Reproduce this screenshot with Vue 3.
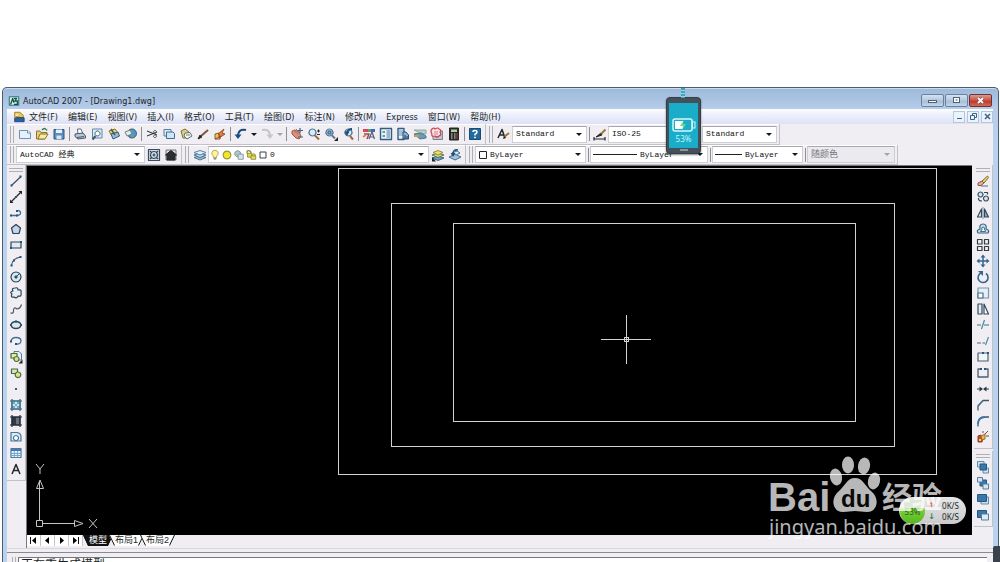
<script setup>
import { h, ref } from 'vue'

const N = '#22557f'
const K = '#20262b'
const L = '#bcd8ee'
const Y = '#ecd24c'
const X = 'none'

/* each shape: [path, fill, stroke, stroke width] */
const art = {
  page: [['M1.5 3.5H10L12.5 6V11.500H1.5Z', '#e4f1fb', '#6b93b5'], ['M9.500 3.500V6H12', '#fff', '#6b93b5']],
  open: [['M1.500 12V4H5L6 5.500H12L9.500 12Z', '#e3cf7c', '#8c762c'], ['M3 12L5 7H13L10 12Z', '#f7eaa5', '#8c762c'], ['M7 3Q10 0 12 3.500', X, '#2d7a52', 1.500]],
  save: [['M2 2.500H12V12H2Z', '#5b8fc0', '#2c567e'], ['M4 2.500H10V6H4Z', '#e6f1fa', X], ['M4.500 8.500H9.500V12H4.500Z', '#d8e4ee', X]],
  plot: [['M4.500 2H8L10 7H5Z', '#fff', '#596d80'], ['M2 7L10 6L12.500 9V11L5 12L2 9.500Z', '#b9c6d3', '#42586d'], ['M4 10.500L11 9.500', X, '#42586d']],
  preview: [['M2.500 2H12V11H2.500Z', '#dcecf9', '#5c89ad'], ['M7.500 4A2.500 2.500 0 1 1 7.490 4Z', '#fff', '#42586d'], ['M5.500 9L2.500 12.500', X, '#42586d', 2]],
  publish: [['M2 4L8 2L11 6L5 9Z', '#eedb5d', '#807223'], ['M4 7L11 5L12.500 9L6 12Z', '#94bad8', '#345b7b'], ['M4 2L8 8', X, '#435668', 1.500]],
  globe: [['M8 2A4.500 4.500 0 1 1 7.990 2Z', '#4f93c9', '#335b7f'], ['M6 3L9 4L7 7L10 9L8 11', '#6eb266', X], ['M1 5L6 3L8 7L3 9Z', '#e3e9ee', '#71808e']],
  cut: [['M2 4L12 8M2 9L12 5', X, K], ['M10 3.500A1.500 1.300 0 1 1 9.990 3.500ZM10 8A1.500 1.300 0 1 1 9.990 8Z', X, '#4a5b6a']],
  copy: [['M2 2.500H9V9H2Z', '#dcebf7', '#537fa3'], ['M4.500 5H11L12.500 6.500V11.500H4.500Z', '#cfe4f5', '#3f6f95']],
  paste: [['M2 4L6 2L10 5L9 11L4 11Z', '#dfd07d', '#7b7236'], ['M6 6L11 5.500L13 9L8 12L5 9Z', '#f4f4ee', '#5c727e'], ['M7 8H11', X, '#6c8f76']],
  brush: [['M2 12L4 8L6 10Z', K, K], ['M5 9L12 3', X, '#82533a', 2]],
  blockedit: [['M2 12V7L6 6V10Z', '#e9c85a', '#7e662d'], ['M5 7L11 2L9 6L12 7L6 11L7 8Z', '#e98238', '#9b4b29'], ['M2 12H7V9', X, '#9e3029']],
  undo: [['M12 3Q4 1 4 10', X, '#194b80', 2], ['M0.500 7.500H7.500L4 12Z', '#194b80', X]],
  redo: [['M2 3Q10 1 10 10', X, '#c5c6ca', 2], ['M6.500 7.500H13.500L10 12Z', '#c5c6ca', X]],
  pan: [['M2 4L5 3L9 5L11 9L9 12L6 11L2 7Z', '#d99079', '#a4594a'], ['M3 3L8 7M6 2L9 6', X, '#b66a58'], ['M10 1V6M7.500 3.500H13M8 10H13', X, '#33608a', 1.200]],
  zoom: [['M5.500 2A3.500 3.500 0 1 1 5.490 2Z', '#d7eafa', '#4a7092', 1.200], ['M8 8.500L12 12.500', X, '#a06a3d', 2], ['M10 4H13M11.500 2.500V5.500M10 7.500H13', X, K]],
  zoomwin: [['M5.500 2A3.500 3.500 0 1 1 5.490 2Z', '#d7eafa', '#4a7092', 1.200], ['M4 4H7V7H4Z', '#93b3cc', N], ['M8 8.500L11 11.500', X, '#6a7888', 2], ['M14 10V14H10Z', K, X]],
  zoomprev: [['M7.500 2A3.500 3.500 0 1 1 7.490 2Z', '#d7eafa', '#4a7092', 1.200], ['M9 9L12 12.500', X, '#a06a3d', 2], ['M11 2Q7 2 6 6', X, '#1e4d7d', 2], ['M3.500 4.500H8.500L6 9Z', '#1e4d7d', X]],
  props: [['M1 2H6V5H1Z', '#d34a54', X], ['M6 2H9V5H6Z', '#55a95d', X], ['M9 2H13V5H9Z', '#4a63bf', X], ['M2 7H7L5 12', X, '#9c4464', 1.500], ['M7 12L10 5L12.500 12M8 10H12', X, '#4d6077', 1.200], ['M1 10L4 8', X, '#d29134', 2]],
  center: [['M1.500 1.500H12.500V12.500H1.500Z', '#e8f2fa', '#315d87', 1.400], ['M3.500 4H6V6H3.500ZM3.500 8H6V10H3.500Z', '#62a183', X], ['M7.500 4H11M7.500 6H11M7.500 8H11M7.500 10H11', X, '#527799']],
  palette: [['M2 1.500H8V12.500H2Z', '#e8f2fa', '#315d87', 1.400], ['M3 4H7M3 6H7M3 8H7', X, '#6b8ea8'], ['M7 5H10L12.500 8V12H7Z', '#8fb5d5', '#264f75'], ['M9 8V12M11 9V12', X, '#1b3856']],
  sheets: [['M1 3H13V7L7 6Z', '#b8d0c9', '#8ea8a6'], ['M1 7L8 6L13 9V11L7 12Z', '#6f9ab5', '#51788f'], ['M1 9L6 9', X, '#cc9b49', 2]],
  markup: [['M3 4H12.500V12.500H3Z', '#bac7d3', '#76858f'], ['M2 2Q4 0 5 2Q8 0 9 2Q12 3 10 5Q12 8 9 9Q7 11 5 9Q1 10 2 7Q0 4 2 2Z', '#fae3e5', '#d33d49', 1.200], ['M4 5H8M4 7H8', X, '#da7f87']],
  calc: [['M2.500 1H11.500V13H2.500Z', '#292826', '#292826'], ['M4 2.500H10V5H4Z', '#a9d29c', X], ['M4 7H5.500M7 7H8.500M4 9H5.500M7 9H8.500M4 11H5.500M7 11H8.500', X, '#ddd'], ['M9.500 7H10.500M9.500 9H10.500M9.500 11H10.500', X, '#cf5146', 1.500]],
  help: [['M1.500 1.500H12.500V12.500H1.500Z', '#25699b', '#174a74'], ['M5 5Q5 3.500 7 3.500Q9 3.500 9 5Q9 6.500 7 7.200V8.500', X, '#fff', 1.500], ['M6.200 9.800H7.800V11.200H6.200Z', '#fff', X]],
  textstyle: [['M1 11L5 2.500L8 11M2.500 8H7', X, K, 1.500], ['M7 10L12 6', X, '#9c7737', 2], ['M6 12L7 9L9 11Z', K, X]],
  dimstyle: [['M1 12H12M1 10V13.500M12 10V13.500', X, K, 1.200], ['M3 10L8 6L9 8Z', K, K], ['M8 7L12.500 2.500', X, '#9c7737', 2]],
  gear: [['M1.500 1.500H12.500V12.500H1.500Z', '#d6dde6', '#394c5e', 1.200], ['M7 3.500A3.500 3.500 0 1 1 6.990 3.500ZM7 5.500V8.500M5.500 7H8.500M3 3L4.500 4.500M11 3L9.500 4.500M3 11L4.500 9.500M11 11L9.500 9.500', X, '#304459', 1.200]],
  home: [['M2 2H12V12H2Z', '#ddd', '#777'], ['M1.500 7L7 2.500L12.500 7H11V12H3V7Z', '#2b2e31', K]],
  layers: [['M1 9.500L7 7.500L13 9.500L7 12Z', '#93b6ce', '#4e7998'], ['M1 7L7 5L13 7L7 9.500Z', '#c0d9e9', '#4e7998'], ['M1 4.500L7 2.500L13 4.500L7 7Z', '#dfedf5', '#5b85a2']],
  layerprev: [['M1 10L7 8L13 10L7 12.500Z', '#719dbd', '#3d6787'], ['M1 7L7 5L13 7L7 9.500Z', '#cbd98a', '#5e7b54'], ['M2 4.500L7 2.500L12 4.500L7 7Z', '#f1df68', '#9b893a'], ['M1 9V13.500H5Z', K, X]],
  layerback: [['M1 9L7 6L13 9L7 12Z', '#a5c4dc', '#456e90'], ['M4 5L9 3L12 5L8 7Z', '#dfedf5', '#456e90'], ['M10 2Q5 1 5 6', X, '#24517d', 1.600], ['M2.500 5H7.500L5 9Z', '#24517d', X]],
  bulb: [['M7 1.500A3.500 3.500 0 0 0 5 8V10H9V8A3.500 3.500 0 0 0 7 1.500Z', '#fff59c', '#a79749'], ['M5.500 11.500H8.500', X, '#6f7172', 1.500]],
  sun: [['M7 2.500A4.500 4.500 0 1 1 6.990 2.500Z', '#f2e727', '#969336', 1.300]],
  vpfreeze: [['M5.500 2A3.500 3.500 0 1 1 5.490 2Z', '#b4c5ca', '#70838a'], ['M6 6H12V12H6Z', '#d6e2e7', '#7c949f']],
  lock: [['M3 6Q1 2 4 2Q7 2 7 5', X, '#8a8a35', 1.400], ['M3 5H8V9.500H3Z', Y, '#8a8a35'], ['M8 8V6.500Q10 4.500 12 6.500V8M7 8H12.500V12H7Z', '#e7dc64', '#8a8a35']],
  swatch: [['M3.500 3.500H10.500V10.500H3.500Z', '#fff', K]],
  line: [['M2.500 11.500L12 2.500', X, '#3d4c57', 1.200], ['M1.500 10.500H3.500V12.500H1.500ZM10.500 1.500H12.500V3.500H10.500Z', N, X]],
  xline: [['M2 12L12 2', X, K, 1.200], ['M1 13V9.500L4.500 13ZM13 1V4.500L9.500 1Z', K, X], ['M6 6H8V8H6Z', N, X]],
  pline: [['M2 9.500H8Q12 9 11.500 6.500Q11 4 8 5', X, '#3d6e94', 1.300], ['M1 8.500H3V10.500H1ZM7 8.500H9V10.500H7ZM7 4H9V6H7Z', N, X]],
  polygon: [['M7 2.500L11.500 6L10 11.500H4L2.500 6Z', L, '#33414d', 1.200]],
  rect: [['M2 4H12V10H2Z', '#dcebf6', '#33414d', 1.200], ['M1 9H3V11H1ZM11 3H13V5H11Z', N, X]],
  arc: [['M2.500 12Q3 4 12 3', X, '#3d4c57', 1.200], ['M1.500 10.500H3.500V12.500H1.500ZM4 5.500H6V7.500H4ZM10.500 2H12.500V4H10.500Z', N, X]],
  circle: [['M7 2A5 5 0 1 1 6.990 2Z', '#d7e8f3', '#33414d', 1.200], ['M7 7L10 4M6 6H8V8H6Z', N, N]],
  cloud: [['M4 5Q2 2 6 2Q9 1 9 4Q13 3 12 7Q13 11 9 10Q8 13 5 11Q1 12 3 8Q0 6 4 5Z', '#e3eff7', '#33414d', 1.200]],
  spline: [['M1.500 11Q5 12 4.500 8Q5 4.500 8 7Q11 7 12.500 2.500', X, '#4c5963', 1.200]],
  ellipse: [['M7 3.500A5 3.500 0 1 1 6.990 3.500Z', '#d7e8f3', '#33414d', 1.300], ['M1 6H3V8H1ZM11 6H13V8H11ZM6 2.500H8V4.500H6Z', N, X]],
  elarc: [['M2 7.500Q2.500 3.500 7 3.500Q12 3.500 12 7Q11.500 10.500 7 10', X, '#417096', 1.300], ['M1 6.500H3V8.500H1ZM6 9H8V11H6Z', N, X]],
  insert: [['M5 1.500H10L12.500 4V10H5Z', '#e6f1f7', '#527d9d'], ['M2 3.500H8V8H2Z', '#ece88d', '#456b50', 1.200], ['M7.500 6.500A2.500 2.500 0 1 1 7.490 6.500Z', '#dce87a', '#456b50', 1.200], ['M13.500 9.500V13.500H9.500Z', K, X]],
  block: [['M2.500 3H8.500V7.500H2.500Z', '#dfe6a8', '#456b50', 1.200], ['M9 6A2.800 2.800 0 1 1 8.990 6Z', '#dce87a', '#456b50', 1.200]],
  point: [['M6 6H8V8H6Z', '#246c86', X]],
  hatch: [['M3 3H11V11H3Z', '#cde7ef', '#2f6179'], ['M1 3H13M1 11H13M3 1V13M11 1V13', X, '#2f6179', 1.200], ['M3 7L7 3M3 11L11 3M7 11L11 7M3 7L7 11M3 3L11 11M7 3L11 7', X, '#5a9bab', 0.800]],
  gradient: [['M3 3H11V11H3Z', '#68727c', '#222b35'], ['M3 3H7V11H3Z', '#303944', X], ['M1 3H13M1 11H13M3 1V13M11 1V13', X, '#222b35', 1.200]],
  region: [['M2 2.500H8Q12 3 12 7V11H2Z', '#dbeaf5', '#477495', 1.200], ['M7 5.500A2.500 2.500 0 1 1 6.990 5.500Z', '#fff', '#477495', 1.200]],
  grid: [['M2 2.500H12V11.500H2Z', '#eff6fc', '#4879a9', 1.200], ['M2 3H12V5H2Z', '#4879a9', X], ['M2 7.500H12M2 9.500H12M5.300 5V11.500M8.600 5V11.500', X, '#79a3ca']],
  text: [['M3 12L7 2.500L11 12M4.500 8.500H9.500', X, K, 1.500]],
  erase: [['M2 9L6 7L8 9L5 11.500H2Z', '#e9a8a0', '#8a5549'], ['M6 7L11.500 2L12.500 3.500L8 9Z', '#ecd564', '#7b693a'], ['M5 12H12', X, '#62686e']],
  copyobj: [['M4.500 2A2.500 2.500 0 1 1 4.490 2ZM10 6A2.500 2.500 0 1 1 9.990 6Z', '#d2e2ee', '#33485b', 1.200], ['M8 2.500H11.500V4.500M2.500 8Q2 11 6 11', X, '#33485b', 1.200]],
  mirror: [['M5.500 3V11H1.500Z', '#e5eef5', '#33485b', 1.200], ['M8.500 3V11H12.500Z', '#88afcb', '#33485b', 1.200], ['M7 1V13', X, '#667785', 0.800]],
  offset: [['M2 11Q0 8 4 7Q3 2 7 2Q11 2 10 7Q14 8 12 11Z', '#c7deee', '#36627f', 1.200], ['M4.500 9.500Q4 8.500 6 8Q5 5 7 5Q9 5 8.500 8Q10 8 9.500 9.500Z', '#fff', '#3f718e']],
  array: [['M1.500 1.500H6V6H1.500ZM8.500 1.500H12.500V6H8.500ZM1.500 8.500H6V12.500H1.500ZM8.500 8.500H12.500V12.500H8.500Z', '#eef1f4', '#343b42', 1.200]],
  move: [['M7 2V12M2 7H12', X, '#346690', 1.500], ['M7 0.500L9.500 3.500H4.500ZM7 13.500L9.500 10.500H4.500ZM0.500 7L3.500 4.500V9.500ZM13.500 7L10.500 4.500V9.500Z', '#346690', X]],
  rotate: [['M5 3A5 5 0 1 0 10 3.500', X, '#346690', 1.600], ['M2 1H7V6Z', '#346690', X]],
  scale: [['M2 2H12.500V12H2Z', '#e5eff7', '#7896ae', 1.200], ['M2 7H7V12H2Z', '#fff', '#456c8c', 1.200]],
  stretch: [['M2 2H6V12H2Z', '#e2edf6', '#33485b', 1.200], ['M8 2V12H12.500Z', '#fff', '#33485b', 1.200]],
  trim: [['M1 7H5M8 7H13', X, '#4d6a7e', 1.200], ['M8.500 2L5.500 11', X, '#4289ad', 1.200]],
  extend: [['M1 9H5M6.500 9H9', X, '#4d6a7e', 1.200], ['M12.500 3L9.500 11', X, '#4289ad', 1.200]],
  breakpt: [['M2 3H12V11H2Z', '#f2f5f8', '#4b5f70', 1.200], ['M6 2H8V4H6ZM11 2H13V4H11Z', N, X]],
  breakobj: [['M5 3H2V11H12V3H9', X, '#4b5f70', 1.300], ['M4 2H6V4H4ZM8 2H10V4H8Z', N, X]],
  join: [['M1 7H6M8 7H13', X, '#26394a', 1.200], ['M3.500 4.500L7 7L3.500 9.500ZM10.500 4.500L7 7L10.500 9.500Z', '#26394a', X]],
  chamfer: [['M2 12.500V8L7 2.500H13', X, '#46535d', 1.300], ['M2 8L7 2.500', X, '#3f789d', 1.300]],
  fillet: [['M2 12.500V10Q2 3 10 3H13', X, '#46535d', 1.300], ['M2 10Q2 3 9 3', X, '#3577a9', 1.800]],
  explode: [['M2 6L5 5L7 8L6 12L2 12Z', '#bb4d31', '#8d3a27'], ['M5 6L9 4L9 9L6 10Z', '#e8b74c', '#9b6d30'], ['M9 4L12 1M10 6H13M7 3V1', X, '#6e4e38'], ['M3 9H5V11H3Z', '#f2d255', X]],
  order1: [['M1.500 1.500H8V7H1.500Z', '#cfe0ed', '#648cab'], ['M7 8H12.500V13H7Z', '#cfe0ed', '#648cab'], ['M4 4H10.500V10H4Z', '#3c77aa', '#275883']],
  order2: [['M4 4H10.500V10H4Z', '#3c77aa', '#275883'], ['M1.500 1.500H6.500V6H1.500ZM7 8H12.500V13H7Z', '#d8e6f0', '#537e9f']],
  order3: [['M5 5H12.500V12H5Z', '#cfe0ed', '#648cab'], ['M1.500 2.500H10.500V9.500H1.500Z', '#3c77aa', '#275883']],
  order4: [['M1.500 2.500H10.500V9.500H1.500Z', '#3c77aa', '#275883'], ['M5.500 6H12.500V12H5.500Z', '#dfeaf2', '#537e9f']],
  app: [['M1.500 2H12.500V12H1.500Z', '#d9eee9', '#287a76', 1.200], ['M3 11L5.500 4L7 9M7 4H10L8 7H11V11H7', X, '#12504d', 1.500]],
  dwg: [['M2 1.500H8L12 5V9H2Z', '#f0c944', '#94722a'], ['M4 7L13 8V12.500H2V9Z', '#2e5f9d', '#1f3f70'], ['M3 3H6V6H3Z', '#f3e6ad', X]],
}

const Icon = (props) =>
  h('svg', { viewBox: '0 0 14 14', width: 14, height: 14, 'aria-hidden': 'true' },
    art[props.name].map(([d, fill, stroke, w]) =>
      h('path', { d, fill, stroke, 'stroke-width': w ?? 1, 'stroke-linejoin': 'round' })))
Icon.props = ['name']

const menus = ['文件(F)', '编辑(E)', '视图(V)', '插入(I)', '格式(O)', '工具(T)', '绘图(D)', '标注(N)', '修改(M)', 'Express', '窗口(W)', '帮助(H)']

const standard = ['page', 'open', 'save', '|', 'plot', 'preview', 'publish', 'globe', '|', 'cut', 'copy', 'paste', 'brush', 'blockedit', '|', 'undo', 'v', 'redo', 'w', '|', 'pan', 'zoom', 'zoomwin', 'zoomprev', '|', 'props', 'center', 'palette', 'sheets', 'markup', 'calc', '|', 'help']
const draw = ['line', 'xline', 'pline', 'polygon', 'rect', 'arc', 'circle', 'cloud', 'spline', 'ellipse', 'elarc', 'insert', 'block', 'point', 'hatch', 'gradient', 'region', 'grid', 'text']
const modify = ['erase', 'copyobj', 'mirror', 'offset', 'array', 'move', 'rotate', 'scale', 'stretch', 'trim', 'extend', 'breakpt', 'breakobj', 'join', 'chamfer', 'fillet', 'explode']
const order = ['order1', 'order2', 'order3', 'order4']

const tabs = ['模型', '布局1', '布局2']
const active = ref('模型')
</script>

<template>
  <div class="page">
    <main class="window">
      <header class="title">
        <Icon name="app" class="app-icon" />
        <h1>AutoCAD 2007 - [Drawing1.dwg]</h1>
        <div class="win-buttons">
          <button aria-label="Minimize"><svg width="11" height="9"><rect x="1.500" y="4.500" width="8" height="2" fill="#fff" stroke="#4c6078" /></svg></button>
          <button aria-label="Restore"><svg width="11" height="9"><rect x="2.500" y="1.500" width="6" height="5" fill="#fff" stroke="#4c6078" /><rect x="4.500" y="3.500" width="2" height="1" fill="#4c6078" /></svg></button>
          <button class="close" aria-label="Close"><svg width="11" height="9"><path d="M3 2L8 7M8 2L3 7" stroke="#6b3a3a" stroke-width="3" /><path d="M3 2L8 7M8 2L3 7" stroke="#fff" stroke-width="2" /></svg></button>
        </div>
      </header>

      <nav class="menu">
        <Icon name="dwg" class="dwg-icon" />
        <button v-for="m in menus" :key="m">{{ m }}</button>
        <div class="doc-buttons">
          <button aria-label="Minimize drawing"><svg width="9" height="9"><path d="M2 6.500H7" stroke="#3b6287" stroke-width="1" /></svg></button>
          <button aria-label="Restore drawing"><svg width="9" height="9"><path d="M3.500 3V1.500H7.500V5.500H6M1.500 3.500H5.500V7.500H1.500Z" fill="none" stroke="#3b6287" /></svg></button>
          <button aria-label="Close drawing"><svg width="9" height="9"><path d="M2 2L7 7M7 2L2 7" stroke="#3b6287" stroke-width="1.500" /></svg></button>
        </div>
      </nav>

      <div class="row">
        <section class="bar">
          <i class="grip"></i>
          <template v-for="(t, i) in standard" :key="i">
            <i v-if="t === '|'" class="sep"></i>
            <button v-else-if="t === 'v' || t === 'w'" class="drop" :class="{ dim: t === 'w' }" aria-label="history"></button>
            <button v-else class="tool" :aria-label="t"><Icon :name="t" /></button>
          </template>
        </section>
        <section class="bar">
          <i class="grip"></i>
          <button class="tool" aria-label="Text style"><Icon name="textstyle" /></button>
          <div class="combo w-text"><select aria-label="Text style"><option>Standard</option></select></div>
          <i class="sep"></i>
          <button class="tool" aria-label="Dimension style"><Icon name="dimstyle" /></button>
          <div class="combo w-dim"><select aria-label="Dimension style"><option>ISO-25</option></select></div>
          <button class="tool" aria-label="Table style"><Icon name="grid" /></button>
          <div class="combo w-text"><select aria-label="Table style"><option>Standard</option></select></div>
        </section>
      </div>

      <div class="row">
        <section class="bar">
          <i class="grip"></i>
          <div class="combo w-space"><select aria-label="Workspace"><option>AutoCAD 经典</option></select></div>
          <button class="tool" aria-label="Workspace settings"><Icon name="gear" /></button>
          <button class="tool" aria-label="My workspace"><Icon name="home" /></button>
        </section>
        <section class="bar">
          <i class="grip"></i>
          <button class="tool" aria-label="Layers"><Icon name="layers" /></button>
          <div class="combo w-layer">
            <span class="states"><Icon name="bulb" /><Icon name="sun" /><Icon name="vpfreeze" /><Icon name="lock" /><Icon name="swatch" /></span>
            <select aria-label="Layer"><option>0</option></select>
          </div>
          <button class="tool" aria-label="Make current"><Icon name="layerprev" /></button>
          <button class="tool" aria-label="Previous layer"><Icon name="layerback" /></button>
        </section>
        <section class="bar">
          <i class="grip"></i>
          <div class="combo w-color"><Icon name="swatch" /><select aria-label="Color"><option>ByLayer</option></select></div>
          <i class="sep"></i>
          <div class="combo w-type"><i class="stroke long"></i><select aria-label="Linetype"><option>ByLayer</option></select></div>
          <i class="sep"></i>
          <div class="combo w-weight"><i class="stroke"></i><select aria-label="Lineweight"><option>ByLayer</option></select></div>
          <i class="sep"></i>
          <div class="combo off w-plot"><select aria-label="Plot style" disabled><option>随颜色</option></select></div>
        </section>
      </div>

      <div class="body">
        <aside class="side">
          <section class="vbar">
            <i class="vgrip"></i>
            <button v-for="t in draw" :key="t" :aria-label="t"><Icon :name="t" /></button>
          </section>
        </aside>

        <div class="center">
          <svg class="canvas" role="img" aria-label="Drawing">
            <g fill="none" stroke="#d2d2d2">
              <rect x="311.500" y="2.500" width="598" height="306" />
              <rect x="364.500" y="37.500" width="503" height="243" />
              <rect x="426.500" y="57.500" width="402" height="198" />
              <path d="M599.500 149V198M574 173.500H624" />
              <rect x="597.500" y="171.500" width="4" height="4" />
            </g>
            <g fill="none" stroke="#c4c4c4">
              <path d="M9.500 354.500H15.500V360.500H9.500ZM12.500 354V322M9.500 322.500H16.500L13 314ZM12.500 315V322M16 357.500H47M47.500 354.500V360.500L56 357.500Z" />
              <path d="M9 298L13 303L17 298M13 303V308M62 353L70 362M70 353L62 362" />
            </g>
          </svg>
          <footer class="tabs">
            <button class="step" aria-label="First"><svg width="9" height="9"><path d="M1.500 1V8" stroke="#111" /><path d="M7 1V8L3 4.500Z" /></svg></button>
            <button class="step" aria-label="Previous"><svg width="9" height="9"><path d="M6 1V8L2 4.500Z" /></svg></button>
            <button class="step" aria-label="Next"><svg width="9" height="9"><path d="M3 1V8L7 4.500Z" /></svg></button>
            <button class="step" aria-label="Last"><svg width="9" height="9"><path d="M2 1V8L6 4.500Z" /><path d="M7.500 1V8" stroke="#111" /></svg></button>
            <div class="sheets">
              <button v-for="t in tabs" :key="t" class="sheet" :class="{ on: active === t }" @click="active = t">
                <svg class="edge" viewBox="0 0 6 11" width="6" height="11"><path class="fill" d="M0 0H6V11H5Z" /><path d="M0.500 0L5.500 10.500" stroke="#111" /></svg>
                <span>{{ t }}</span>
                <svg class="edge" viewBox="0 0 6 11" width="6" height="11"><path class="fill" d="M0 0H6L1 11H0Z" /><path d="M5.500 0L0.500 10.500" stroke="#111" /></svg>
              </button>
            </div>
          </footer>
        </div>

        <aside class="side right">
          <section class="vbar">
            <i class="vgrip"></i>
            <button v-for="t in modify" :key="t" :aria-label="t"><Icon :name="t" /></button>
          </section>
          <section class="vbar">
            <i class="vgrip"></i>
            <button v-for="t in order" :key="t" :aria-label="t"><Icon :name="t" /></button>
          </section>
        </aside>
      </div>

      <section class="command">
        <i class="grip"></i>
        <output>正在重生成模型。</output>
      </section>
    </main>

    <div class="speed">
      <b>53%</b>
      <span class="up">↑</span><span>0K/S</span>
      <span class="down">↓</span><span>0K/S</span>
    </div>

    <svg class="watermark" width="184" height="88" viewBox="0 0 184 88" role="img" aria-label="Baidu">
      <g fill="#fff" fill-opacity="0.720">
        <text x="0" y="57" class="brand">Bai</text>
        <ellipse cx="68" cy="23" rx="6" ry="8.500" transform="rotate(-12 68 23)" />
        <ellipse cx="80" cy="11" rx="6" ry="8.500" />
        <ellipse cx="96" cy="12" rx="6" ry="8.500" transform="rotate(10 96 12)" />
        <ellipse cx="106" cy="27" rx="6" ry="8.500" transform="rotate(14 106 27)" />
        <path d="M87 24C79 24 77 32 71 37C62 44 64 58 75 58C80 58 83 57 87 57C91 57 94 58 99 58C110 58 112 44 103 37C97 32 95 24 87 24Z" />
        <text x="114" y="54" class="cn">经验</text>
        <text x="1" y="80" class="url">jingyan.baidu.com</text>
      </g>
      <text x="73" y="53" class="du">du</text>
    </svg>

    <div class="phone">
      <i class="cable"></i>
      <div class="screen">
        <svg width="24" height="14" viewBox="0 0 24 14"><rect x="1" y="1" width="19" height="12" rx="2" fill="none" stroke="#d8f6fa" stroke-width="1.500" /><rect x="20.500" y="4" width="2.500" height="6" fill="none" stroke="#d8f6fa" /><rect x="3" y="3" width="8" height="8" fill="#fff" /><path d="M12 2L8 8H11L10 12L14 6H11Z" fill="#67d98e" /></svg>
        53%
      </div>
      <i class="key"></i>
    </div>
    <i class="dock"></i>
  </div>
</template>

<style>
html, body { margin: 0; background: #fff; }
</style>

<style scoped>
.page {
  position: relative;
  box-sizing: border-box;
  height: 100vh;
  padding: 87px 1px 0 2px;
  overflow: hidden;
  background: #fff;
  font: 9px/12px "DejaVu Sans Condensed", "Noto Sans", "Noto Sans CJK SC", sans-serif;
  color: #1b1f26;
}
.page * { box-sizing: border-box; }
button { padding: 0; border: 0; background: none; font: inherit; color: inherit; }
svg { display: block; flex: none; }

.window {
  display: flex;
  flex-direction: column;
  height: 100%;
  border: solid #4d5d6b;
  border-width: 1px 1px 0;
  border-radius: 5px 5px 0 0;
  padding: 0 5px 0 4px;
  background: linear-gradient(#9cb8da, #b7cdea 21px, #b9d3ee 60px);
  box-shadow: inset 0 1px #c9dcf0;
}

.title { display: flex; align-items: center; height: 21px; padding: 4px 1px 0; }
.app-icon { width: 12px; height: 12px; }
.title h1 { margin: 0 0 0 3px; font-size: 9px; font-weight: 400; }
.win-buttons { display: flex; gap: 1px; margin-left: auto; }
.win-buttons button { display: grid; place-items: center; width: 23px; height: 13px; border: 1px solid #68819c; border-radius: 2px; background: linear-gradient(#d5e2f1, #b3c7de 50%, #a3bbd6 50%, #c3d6ea); }
.win-buttons .close { border-color: #6d3137; background: linear-gradient(#dc9a90, #c9503f 50%, #b93424 50%, #d36a54); }

.menu { display: flex; align-items: center; gap: 10px; height: 15px; padding-left: 6px; background: linear-gradient(#fcfdff, #eceffa 45%, #dde1f5); }
.dwg-icon { width: 12px; height: 12px; margin-right: -6px; }
.doc-buttons { display: flex; gap: 2px; margin-left: auto; }
.doc-buttons button { display: grid; place-items: center; width: 12px; height: 12px; border: 1px solid #b5c7dc; background: #eaf3fc; }

.row { display: flex; height: 21px; background: #f0eef2; }
.row + .row { height: 20px; }
.bar { display: flex; align-items: center; padding: 0 2px 0 3px; border: solid #c2c1c7; border-width: 0 1px 1px 0; box-shadow: inset 0 1px #fff; }
.grip { width: 4px; height: 17px; margin-right: 2px; border: solid #b0afb5; border-width: 0 1px; }
.sep { width: 1px; height: 14px; margin: 0 1px 0 2px; background: #8f8e94; }
.tool { display: grid; place-items: center; width: 17px; height: 18px; }
.drop { width: 9px; height: 16px; display: grid; place-items: center; }
.drop::after, .combo::after { content: ""; border: 3px solid transparent; border-top-color: #16191d; border-bottom: 0; }
.drop.dim::after, .off::after { border-top-color: #a4a3a8; }

.combo { display: flex; align-items: center; height: 17px; padding-right: 4px; border: 1px solid #cfced4; border-top-color: #a9a8ae; background: #fff; }
.combo select { flex: 1; width: 0; min-width: 0; padding: 0 0 0 3px; border: 0; outline: 0; appearance: none; background: none; font: 8px/14px "Liberation Mono", "Noto Sans CJK SC", monospace; color: #111; opacity: 1; }
.combo.off { background: #ebeaee; }
.combo.off select { font-size: 9px; color: #77767b; }
.w-text { width: 75px; }
.w-dim { width: 77px; }
.w-space { width: 129px; }
.w-layer { width: 221px; }
.w-color { width: 111px; }
.w-color select { padding-left: 0; }
.w-type { width: 118px; }
.w-weight { width: 91px; }
.w-plot { width: 88px; }
.states { display: flex; }
.states svg { width: 12px; }
.w-layer select { padding-left: 1px; }
.stroke { width: 27px; height: 1px; margin-left: 2px; background: #222; }
.stroke.long { width: 44px; }

.body { display: grid; grid-template-columns: 19px 1fr 21px; flex: 1; min-height: 0; background: #f0eef2; }
.side { display: flex; flex-direction: column; gap: 2px; }
.side.right { padding-left: 2px; }
.vbar { display: flex; flex-direction: column; padding: 3px 0; border: solid #c2c1c7; border-width: 0 1px 1px 0; }
.vbar button { display: grid; place-items: center; height: 16px; }
.vgrip { height: 4px; margin: 0 2px 1px; border: solid #b0afb5; border-width: 1px 0; }
.center { display: flex; flex-direction: column; min-width: 0; padding-bottom: 1px; border: solid #77767c; border-width: 1px 0 0 1px; }
.canvas { flex: 1; width: 100%; min-height: 0; background: #000; }
.tabs { display: flex; height: 12px; background: #f0eef2; }
.step { display: grid; place-items: center; width: 14px; height: 11px; background: #fff; border-right: 1px solid #c5c4ca; }
.sheets { display: flex; }
.sheet { display: flex; height: 11px; font: 9px/11px "Liberation Sans", "Noto Sans CJK SC", sans-serif; white-space: nowrap; }
.sheet + .sheet { margin-left: -4px; }
.sheet span { background: #fff; }
.sheet .fill { fill: #fff; }
.sheet.on { color: #fff; }
.sheet.on span { background: #111; }
.sheet.on .fill { fill: #111; }

.command { display: flex; height: 14px; padding: 8px 6px 0 5px; border-top: 1px solid #d8d7dc; background: linear-gradient(#f0eef2 3px, #8a898f 3px, #8a898f 4px, #f0eef2 4px); overflow: hidden; }
.command output { flex: 1; height: 16px; padding-left: 2px; border: solid #77767c; border-width: 1px 0 0 1px; background: #fff; font-size: 12px; line-height: 14px; }

.watermark { position: absolute; right: 48px; bottom: 20px; }
.brand { font: bold 40px "Liberation Sans", sans-serif; }
.cn { font: bold 30px "Noto Sans CJK SC", sans-serif; }
.url { font: 20px "Noto Sans", sans-serif; }
.du { font: bold 24px "Liberation Sans", sans-serif; fill: #080808; }

.speed { position: absolute; right: 34px; bottom: 38px; display: grid; grid-template: 11px 11px / 25px 13px 1fr; align-content: center; align-items: center; width: 67px; height: 27px; padding: 2px 4px 1px 1px; border-radius: 14px; background: linear-gradient(rgba(255, 255, 255, 0.900), rgba(215, 215, 219, 0.940)); font: 8px/11px "Noto Sans", sans-serif; text-align: right; }
.speed span { padding-right: 3px; }
.speed b { grid-row: 1 / 3; width: 25px; height: 25px; border-radius: 50%; background: linear-gradient(#e0e9d9 35%, #79d339 35%, #58b51e); font-weight: 400; line-height: 26px; text-align: center; color: #355b22; }
.speed .up, .speed .down { font-family: "DejaVu Sans", sans-serif; font-weight: 700; }
.speed .up { color: #e2632e; }
.speed .down { color: #168646; }

.phone { position: absolute; left: 666px; top: 97px; width: 35px; height: 57px; padding: 5px 2px 0; border: 1px solid #30404a; border-radius: 4px; background: #455059; box-shadow: 0 1px 2px rgba(0, 0, 0, 0.500); }
.screen { display: flex; flex-direction: column; align-items: center; gap: 2px; height: 45px; padding-top: 15px; background: #1aadc9; font: 8px/10px "Noto Sans", sans-serif; color: #c4f5fb; }
.key { display: block; width: 8px; height: 2px; margin: 1px auto 0; background: #8a959c; }
.cable { position: absolute; left: 14px; top: -10px; width: 4px; height: 10px; background: repeating-linear-gradient(#3aa5bd 0 2px, #9ad6e0 2px 3px); }
.dock { position: absolute; right: 0; bottom: 0; width: 7px; height: 16px; border-radius: 2px 0 0; background: #39424c; }
</style>
